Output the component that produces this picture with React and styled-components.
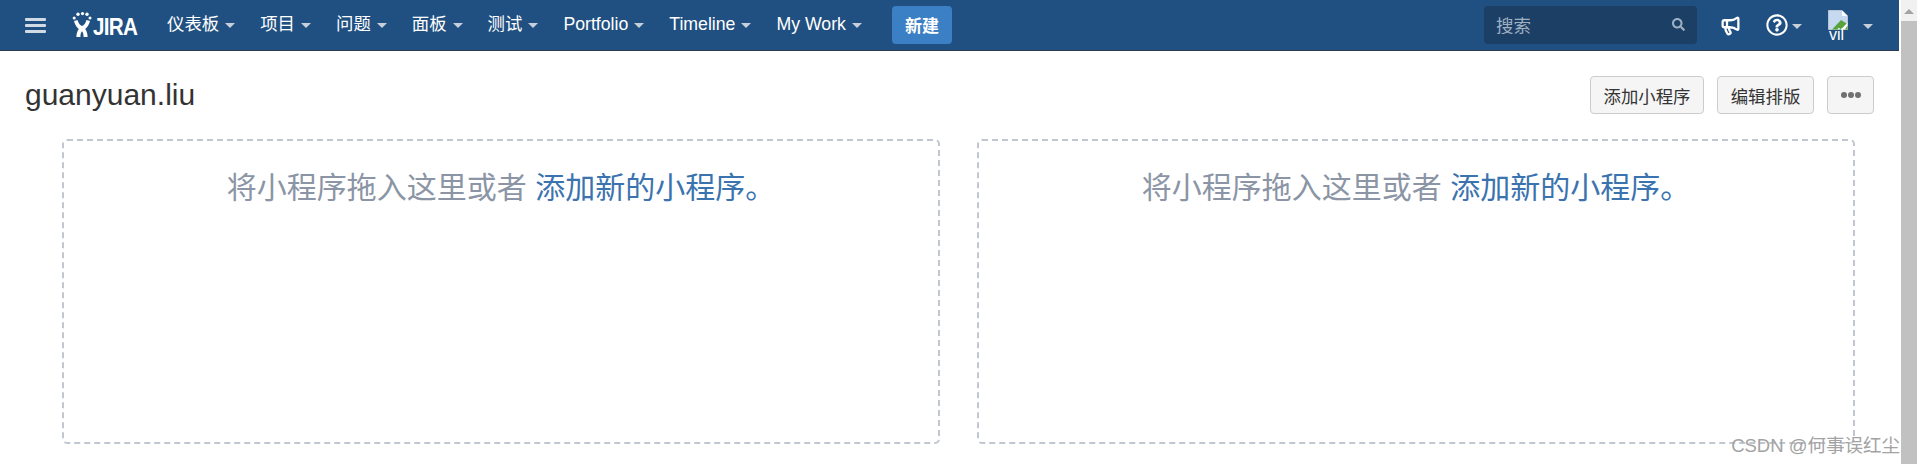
import React from "react";
import styled, { createGlobalStyle } from "styled-components";
import { FaRegQuestionCircle, FaSearch } from "react-icons/fa";
import { Megaphone } from "lucide-react";

const sans = `"Liberation Sans", Arial, "Noto Sans CJK SC", sans-serif`;

const Global = createGlobalStyle`
  html, body { margin: 0; padding: 0; height: 464px; overflow: hidden; background: #fff; }
  body { font-family: ${sans}; }
  * { box-sizing: border-box; }
`;

const Page = styled.div`
  display: flex;
  width: 1917px;
  height: 464px;
  position: relative;
  overflow: hidden;
`;
const Main = styled.div`
  width: 1899px;
  display: flex;
  flex-direction: column;
`;
const TopBar = styled.header`
  height: 51px;
  flex: none;
  background: #205081;
  border-bottom: 1px solid #2b3a50;
  display: flex;
  align-items: center;
  padding-left: 25px;
  padding-right: 26px;
`;
const MenuIcon = styled.span`
  width: 21px;
  height: 15px;
  flex: none;
  display: flex;
  flex-direction: column;
  justify-content: space-between;
  margin-right: 26px;
  margin-top: 1px;
  & > i {
    display: block;
    height: 3px;
    border-radius: 1px;
    background: #d0dbe6;
  }
`;
const Logo = styled.span`
  display: flex;
  align-items: center;
  width: 67px;
  height: 28px;
  flex: none;
  color: #fff;
  margin-right: 28px;
`;
const LogoText = styled.span`
  font: bold 24px/1 ${sans};
  letter-spacing: -0.8px;
  margin-left: 1px;
  margin-top: 4px;
  transform: scaleX(0.86);
  transform-origin: left center;
`;
const Nav = styled.nav`
  display: flex;
  align-items: center;
  gap: 25px;
`;
const NavItem = styled.a`
  display: flex;
  align-items: center;
  gap: 6px;
  color: #fff;
  font-size: ${(p) => (p.$latin ? 17.7 : 17.4)}px;
  line-height: 24px;
  white-space: nowrap;
  margin-top: -2px;
`;
const Caret = styled.span`
  width: 0;
  height: 0;
  flex: none;
  border-left: 5px solid transparent;
  border-right: 5px solid transparent;
  border-top: 5px solid #c7d0da;
  margin-top: 3px;
  margin-left: ${(p) => p.$left || 0}px;
`;
const CreateButton = styled.button`
  width: 60px;
  height: 38px;
  flex: none;
  margin-left: 30px;
  border: 0;
  border-radius: 4px;
  background: #3b7fc4;
  color: #fff;
  font: bold 17px ${sans};
  padding: 0;
  margin-top: -1px;
`;
const Spacer = styled.div`
  flex: 1;
`;
const Search = styled.div`
  width: 213px;
  height: 38px;
  flex: none;
  background: #1c3f66;
  border-radius: 4px;
  display: flex;
  align-items: center;
  justify-content: space-between;
  padding: 0 12px;
  color: #9fb0c2;
  font-size: 17.5px;
  margin-top: -1px;
`;
const IconSlot = styled.span`
  display: flex;
  align-items: center;
  flex: none;
  gap: 4px;
  color: #fff;
  margin-left: ${(p) => p.$left}px;
`;
const Avatar = styled.span`
  position: relative;
  display: block;
  width: 20px;
  height: 31px;
`;
const AvatarAlt = styled.span`
  position: absolute;
  left: 1px;
  top: 17px;
  color: #fff;
  font-size: 16px;
  line-height: 1;
`;
const TitleRow = styled.div`
  height: 88px;
  flex: none;
  display: flex;
  align-items: flex-start;
  justify-content: space-between;
  padding: 25px 25px 0 25px;
`;
const Title = styled.h1`
  margin: 0;
  font-size: 30px;
  font-weight: 400;
  line-height: 38px;
  color: #333;
`;
const Actions = styled.div`
  display: flex;
  gap: 13px;
`;
const ActionButton = styled.button`
  height: 38px;
  width: ${(p) => p.$width}px;
  padding: 0;
  border: 1px solid #ccc;
  border-radius: 4px;
  background: #f5f5f5;
  color: #333;
  font: 17.4px ${sans};
  display: flex;
  align-items: center;
  justify-content: center;
  gap: 1px;
`;
const Dot = styled.i`
  width: 6px;
  height: 6px;
  border-radius: 50%;
  background: #707070;
`;
const Columns = styled.div`
  display: flex;
  gap: 37px;
  padding: 0 44px 0 62px;
`;
const Column = styled.div`
  flex: 1;
  height: 305px;
  border: 2px dashed #c1c7d0;
  border-radius: 5px;
  text-align: center;
  padding-top: 26px;
  font-size: 30px;
  line-height: 42px;
  color: #8b95a5;
`;
const AddLink = styled.a`
  color: #3b73af;
`;
const Scrollbar = styled.div`
  width: 18px;
  flex: none;
  background: #fff;
  padding-left: 2px;
  display: flex;
  flex-direction: column;
`;
const ScrollArrow = styled.div`
  height: 21px;
  background: #f1f1f1;
  display: flex;
  justify-content: center;
  padding-top: 9px;
  &::before {
    content: "";
    width: 0;
    height: 0;
    border-left: 5px solid transparent;
    border-right: 5px solid transparent;
    border-bottom: 5px solid #a3a3a3;
  }
`;
const ScrollThumb = styled.div`
  flex: 1;
  background: #c1c1c1;
`;
const Watermark = styled.div`
  position: absolute;
  right: 17px;
  top: 434px;
  font-size: 18.5px;
  line-height: 24px;
  color: #a3a3a3;
  white-space: nowrap;
`;

const navItems = [
  { label: "仪表板" },
  { label: "项目" },
  { label: "问题" },
  { label: "面板" },
  { label: "测试" },
  { label: "Portfolio", latin: true },
  { label: "Timeline", latin: true },
  { label: "My Work", latin: true },
];

const Gadget = () => (
  <Column>
    将小程序拖入这里或者 <AddLink>添加新的小程序。</AddLink>
  </Column>
);

export default function App() {
  return (
    <Page>
      <Global />
      <Main>
        <TopBar>
          <MenuIcon><i /><i /><i /></MenuIcon>
          <Logo>
            <svg width="20" height="26" viewBox="0 0 20 26" fill="#fff" style={{ flex: "none" }}>
              <circle cx="6" cy="2.2" r="1.7" />
              <circle cx="10.5" cy="1.6" r="1.6" />
              <circle cx="15" cy="2.2" r="1.7" />
              <circle cx="2.2" cy="6" r="1.5" />
              <circle cx="18" cy="6" r="1.5" />
              <path d="M2 9 L5.5 8 C6.5 11 8 13.5 10 14 C12 13.5 13.5 11 14.5 8 L18 9 C17 13 15 15.5 13.2 17 C14.6 19 15.6 21.5 15.6 25 L11.6 25 C11.6 22.5 11 20.5 10 19.3 C9 20.5 8.4 22.5 8.4 25 L4.4 25 C4.4 21.5 5.4 19 6.8 17 C5 15.5 3 13 2 9 Z" />
            </svg>
            <LogoText>JIRA</LogoText>
          </Logo>
          <Nav>
            {navItems.map((item) => (
              <NavItem key={item.label} $latin={item.latin}>{item.label}<Caret /></NavItem>
            ))}
          </Nav>
          <CreateButton>新建</CreateButton>
          <Spacer />
          <Search>
            <span>搜索</span>
            <FaSearch size={13} color="#9fb0c2" />
          </Search>
          <IconSlot $left={23}><Megaphone size={21} strokeWidth={2.6} /></IconSlot>
          <IconSlot $left={25}>
            <FaRegQuestionCircle size={22} />
            <Caret />
          </IconSlot>
          <IconSlot $left={26}>
            <Avatar>
              <svg width="20" height="20" viewBox="0 0 20 20">
                <path d="M0.5 0.5 H14 L19.5 6 V19.5 H0.5 Z" fill="#c5d9f1" stroke="#b9c4d0" />
                <path d="M14 0.5 V6 H19.5 Z" fill="#fff" />
                <path d="M4 19.5 L13 10 L19.5 14 V19.5 Z" fill="#5aa33c" />
                <path d="M13 19.5 L19.5 12.5 V15.5 L17 19.5 Z" fill="#fff" />
              </svg>
              <AvatarAlt>vil</AvatarAlt>
            </Avatar>
            <Caret $left={11} />
          </IconSlot>
        </TopBar>
        <TitleRow>
          <Title>guanyuan.liu</Title>
          <Actions>
            <ActionButton $width={114}>添加小程序</ActionButton>
            <ActionButton $width={97}>编辑排版</ActionButton>
            <ActionButton $width={47}><Dot /><Dot /><Dot /></ActionButton>
          </Actions>
        </TitleRow>
        <Columns>
          <Gadget />
          <Gadget />
        </Columns>
      </Main>
      <Scrollbar>
        <ScrollArrow />
        <ScrollThumb />
      </Scrollbar>
      <Watermark>CSDN @何事误红尘</Watermark>
    </Page>
  );
}
